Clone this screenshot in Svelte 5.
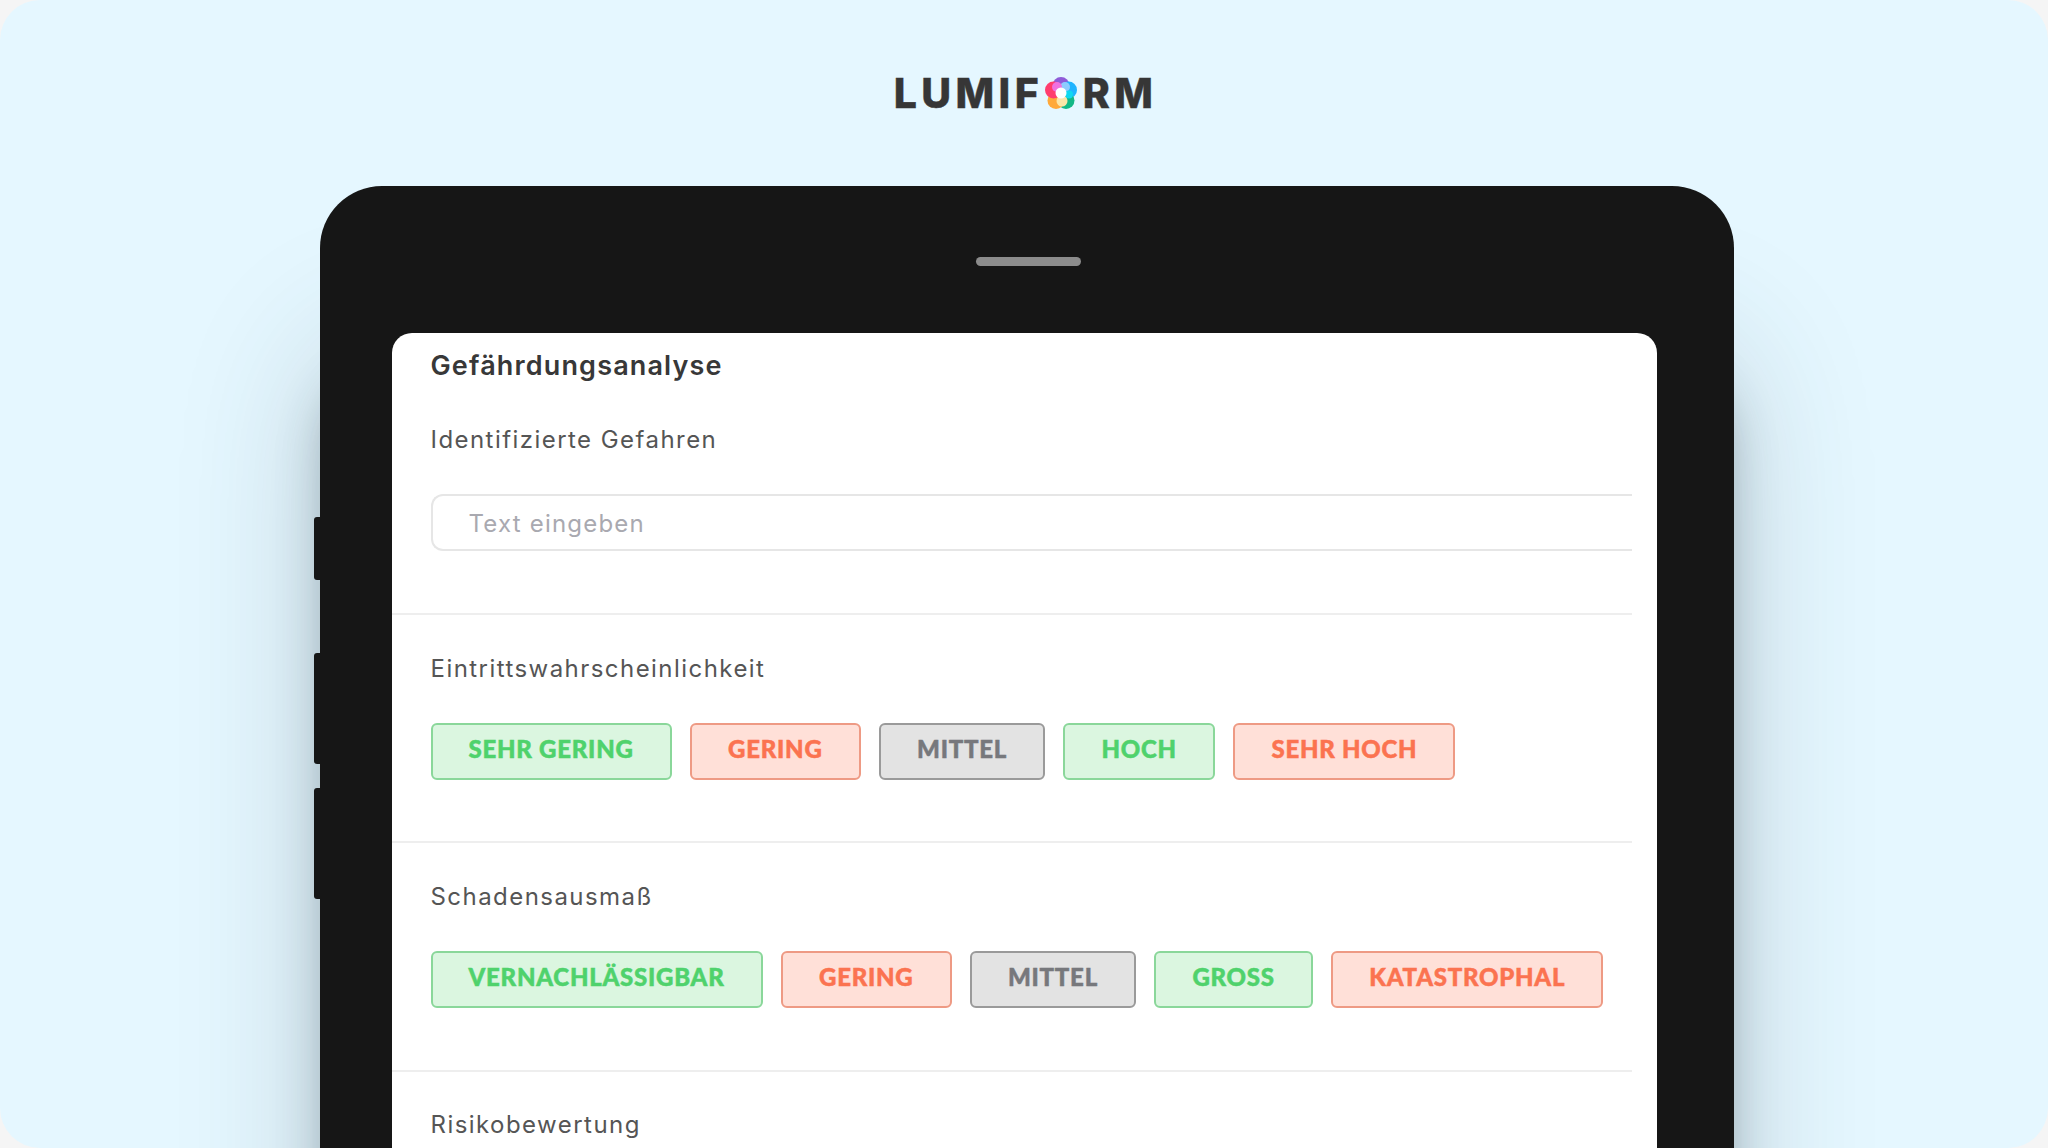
<script>
  const tones = ["good", "bad", "neutral", "good", "bad"];
  const sections = [
    { label: "Eintrittswahrscheinlichkeit", options: ["SEHR GERING", "GERING", "MITTEL", "HOCH", "SEHR HOCH"] },
    { label: "Schadensausmaß", options: ["VERNACHLÄSSIGBAR", "GERING", "MITTEL", "GROSS", "KATASTROPHAL"] }
  ];
</script>

<div class="page">
  <header class="logo">
    <span>LUMIF</span>
    <svg class="flower" viewBox="0 0 32 32" width="32" height="32" aria-hidden="true">
      <g>
        <circle cx="16" cy="8.5" r="8.5" fill="#8f5bd8" />
        <circle cx="23.5" cy="13" r="8.5" fill="#1fb4ff" />
        <circle cx="21" cy="23.5" r="8.5" fill="#12b886" />
        <circle cx="11" cy="23.5" r="8.5" fill="#ffa93a" />
        <circle cx="8.5" cy="13" r="8.5" fill="#ff3d6e" />
      </g>
      <circle cx="20" cy="10" r="5" fill="#8ecbff" />
      <circle cx="12" cy="10" r="5" fill="#f070e0" />
      <circle cx="24" cy="17.5" r="4" fill="#10d8f0" />
      <circle cx="17" cy="24" r="5.5" fill="#fbe6a8" />
      <circle cx="16" cy="16" r="5.5" fill="#fff" />
    </svg>
    <span>RM</span>
  </header>

  <div class="device">
    <i class="side side-a"></i>
    <i class="side side-b"></i>
    <i class="side side-c"></i>
    <div class="handle"></div>

    <main class="screen">
      <h1>Gefährdungsanalyse</h1>

      <section class="first">
        <h2>Identifizierte Gefahren</h2>
        <input type="text" placeholder="Text eingeben" />
      </section>

      {#each sections as section}
        <section>
          <h2>{section.label}</h2>
          <div class="options">
            {#each section.options as option, i}
              <button class={tones[i]}>{option}</button>
            {/each}
          </div>
        </section>
      {/each}

      <section>
        <h2>Risikobewertung</h2>
      </section>
    </main>
  </div>
</div>

<style>
  :global(body) {
    background: #f5f5f5;
    overflow: hidden;
  }

  .page {
    width: 2048px;
    height: 1148px;
    overflow: hidden;
    background: #e5f7ff;
    border-radius: 40px;
    display: flex;
    flex-direction: column;
    align-items: center;
    font-family: Inter, "Liberation Sans", sans-serif;
  }

  .logo {
    height: 186px;
    flex: none;
    display: flex;
    align-items: center;
    margin-left: 3px;
    font-size: 41px;
    line-height: 1;
    font-weight: 800;
    letter-spacing: 4.4px;
    -webkit-text-stroke: 0.4px currentColor;
    color: #363636;
  }

  .flower {
    margin: 0 6px 0 1.5px;
    flex: none;
  }

  .device {
    position: relative;
    flex: none;
    width: 1414px;
    height: 1200px;
    margin-left: 6px;
    box-sizing: border-box;
    padding: 71px 77.5px 0 71.5px;
    background: #161616;
    border-radius: 62px;
    box-shadow:
      0 160px 140px rgba(45, 65, 75, 0.22),
      0 190px 50px -10px rgba(40, 55, 65, 0.36);
  }

  .side {
    position: absolute;
    left: -6.5px;
    width: 7px;
    background: #161616;
    border-radius: 3px 0 0 3px;
  }
  .side-a { top: 331px; height: 63px; }
  .side-b { top: 467px; height: 111px; }
  .side-c { top: 602px; height: 111px; }

  .handle {
    width: 105px;
    height: 9px;
    margin: 0 0 67px 584px;
    border-radius: 5px;
    background: #8c8c8c;
  }

  .screen {
    height: 900px;
    padding-right: 25px;
    background: #fff;
    border-radius: 20px;
  }

  h1 {
    margin: 0;
    padding: 18px 0 0 39px;
    font-size: 27px;
    line-height: 30px;
    font-weight: 600;
    letter-spacing: 1.15px;
    color: #383838;
  }

  h2 {
    margin: 0 0 40px;
    font-size: 24px;
    line-height: 28px;
    font-weight: 400;
    letter-spacing: 1.45px;
    color: #555;
  }

  section {
    padding: 39.5px 0 0 39px;
    border-bottom: 2px solid #eee;
    box-sizing: border-box;
    height: 228.4px;
  }

  section.first {
    height: 234px;
    padding-top: 45px;
  }

  section:last-child {
    border-bottom: 0;
  }

  input {
    display: block;
    box-sizing: border-box;
    width: 100%;
    height: 57px;
    padding: 1px 0 0 36px;
    border: 2px solid #e6e6e6;
    border-right: 0;
    border-radius: 12px 0 0 12px;
    font: 400 24px Inter, "Liberation Sans", sans-serif;
    letter-spacing: 1.2px;
    color: #555;
    outline: none;
  }

  input::placeholder {
    color: #a9a9b0;
    opacity: 1;
  }

  .options {
    display: flex;
    gap: 18.5px;
  }

  button {
    height: 57px;
    padding: 0 36px 5px;
    border-radius: 6px;
    border: 2px solid;
    font: 900 24px Lato, "Liberation Sans", sans-serif;
    letter-spacing: 0.75px;
    -webkit-text-stroke: 0.5px currentColor;
    white-space: nowrap;
  }

  .good {
    background: #dbf6e0;
    border-color: #8ad79a;
    color: #4fd26c;
  }

  .bad {
    background: #ffe0d8;
    border-color: #ee9a84;
    color: #fb7350;
  }

  .neutral {
    background: #e3e3e3;
    border-color: #9a9a9a;
    color: #77787c;
  }
</style>
